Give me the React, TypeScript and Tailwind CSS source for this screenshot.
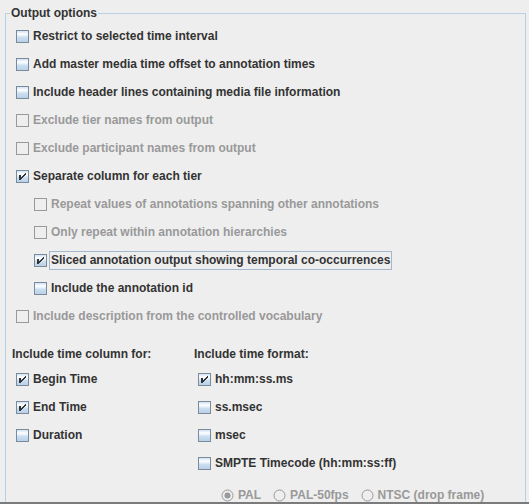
import type { ReactNode } from 'react'

type CheckProps = {
  label: string
  checked?: boolean
  disabled?: boolean
  focused?: boolean
}

function CheckIcon({ checked, disabled }: { checked?: boolean; disabled?: boolean }) {
  return (
    <svg width="13" height="13" viewBox="0 0 13 13" shapeRendering="crispEdges" className="shrink-0">
      <defs>
        <linearGradient id="ocean-check" x1="0" y1="0" x2="0" y2="1">
          <stop offset="0" stopColor="#c8ddf2" />
          <stop offset="0.3" stopColor="#ffffff" />
          <stop offset="0.6" stopColor="#c8ddf2" />
          <stop offset="1" stopColor="#b8cfe5" />
        </linearGradient>
      </defs>
      {disabled ? (
        <rect x="0.5" y="0.5" width="12" height="12" fill="none" stroke="#999999" />
      ) : (
        <rect x="0.5" y="0.5" width="12" height="12" fill="url(#ocean-check)" stroke="#7a8a99" />
      )}
      {checked && (
        <g fill={disabled ? '#999999' : '#333333'}>
          <rect x="3" y="5" width="2" height="5" />
          <rect x="9" y="3" width="1" height="2" />
          <rect x="8" y="4" width="1" height="2" />
          <rect x="7" y="5" width="1" height="2" />
          <rect x="6" y="6" width="1" height="2" />
          <rect x="5" y="7" width="1" height="2" />
        </g>
      )}
    </svg>
  )
}

function RadioIcon({ selected }: { selected?: boolean }) {
  return (
    <svg width="13" height="13" viewBox="0 0 13 13" className="shrink-0">
      <circle cx="6.5" cy="6.5" r="5.5" fill="none" stroke="#999999" />
      {selected && <circle cx="6.5" cy="6.5" r="3" fill="#999999" />}
    </svg>
  )
}

function Label({ children, focused }: { children: ReactNode; focused?: boolean }) {
  return (
    <span
      className={`ml-[2px] border px-[1px] py-[1px] leading-[15px] whitespace-nowrap ${
        focused ? 'border-[#a3b8cc]' : 'border-transparent'
      }`}
    >
      {children}
    </span>
  )
}

function Check({ label, checked, disabled, focused }: CheckProps) {
  return (
    <div className={`flex h-[28px] items-center ${disabled ? 'text-[#999999]' : ''}`}>
      <CheckIcon checked={checked} disabled={disabled} />
      <Label focused={focused}>{label}</Label>
    </div>
  )
}

function Radio({ label, selected }: { label: string; selected?: boolean }) {
  return (
    <div className="flex items-center text-[#999999]">
      <RadioIcon selected={selected} />
      <Label>{label}</Label>
    </div>
  )
}

export default function App() {
  return (
    <div className="flex h-[504px] w-[529px] flex-col overflow-hidden bg-[#eeeeee] font-['Liberation_Sans',Arial,sans-serif] text-[12px] font-bold text-[#333333]">
      <div className="h-[502px] overflow-hidden pl-[5px] pr-[3px] pt-[6px]">
        <fieldset className="border border-[#b8cfe5] pb-[20px]">
          <legend className="ml-[4px] px-[1px] leading-[14px] text-[#333333]">Output options</legend>

          {/* main options */}
          <div className="mt-[2px] pl-[10px]">
            <Check label="Restrict to selected time interval" />
            <Check label="Add master media time offset to annotation times" />
            <Check label="Include header lines containing media file information" />
            <Check label="Exclude tier names from output" disabled />
            <Check label="Exclude participant names from output" disabled />
            <Check label="Separate column for each tier" checked />
            <div className="pl-[18px]">
              <Check label="Repeat values of annotations spanning other annotations" disabled />
              <Check label="Only repeat within annotation hierarchies" disabled />
              <Check label="Sliced annotation output showing temporal co-occurrences" checked focused />
              <Check label="Include the annotation id" />
            </div>
            <Check label="Include description from the controlled vocabulary" disabled />
          </div>

          {/* time columns / formats */}
          <div className="mt-[13px] grid grid-cols-[182px_1fr] pl-[6px]">
            <div>
              <div className="flex h-[22px] items-center">Include time column for:</div>
              <div className="pl-[4px]">
                <Check label="Begin Time" checked />
                <Check label="End Time" checked />
                <Check label="Duration" />
              </div>
            </div>
            <div>
              <div className="flex h-[22px] items-center">Include time format:</div>
              <div className="pl-[4px]">
                <Check label="hh:mm:ss.ms" checked />
                <Check label="ss.msec" />
                <Check label="msec" />
                <Check label="SMPTE Timecode (hh:mm:ss:ff)" />
                <div className="mt-[4px] flex h-[28px] items-center gap-[10px] pl-[23px]">
                  <Radio label="PAL" selected />
                  <Radio label="PAL-50fps" />
                  <Radio label="NTSC (drop frame)" />
                </div>
              </div>
            </div>
          </div>
        </fieldset>
      </div>
      <div className="h-[2px] bg-[#7b7b7b]" />
    </div>
  )
}
